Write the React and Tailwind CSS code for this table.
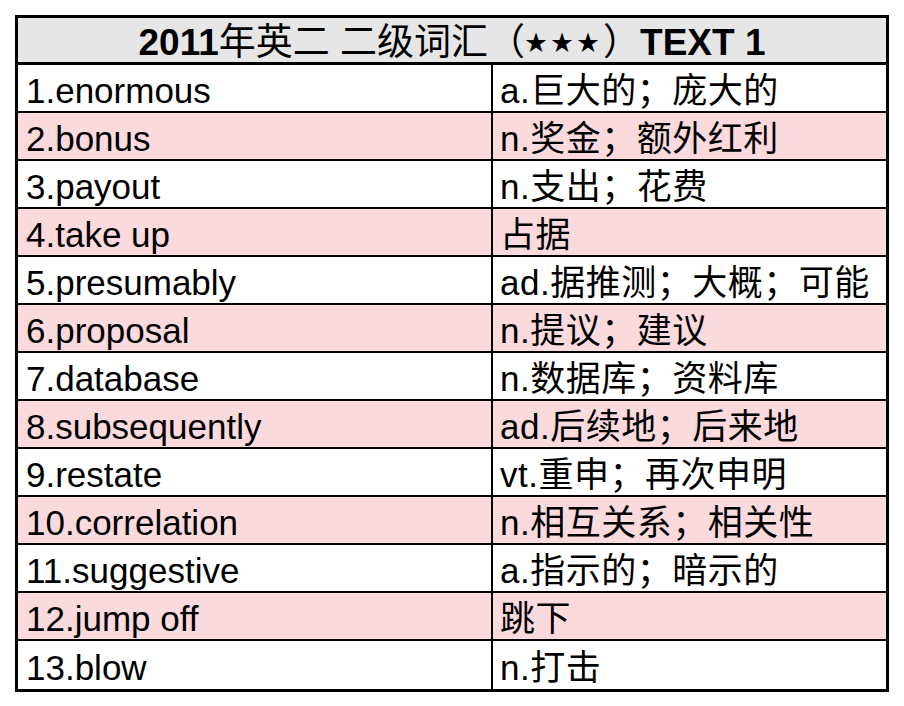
import React from 'react';

const rows = [
  ['1.enormous', 'a.巨大的；庞大的'],
  ['2.bonus', 'n.奖金；额外红利'],
  ['3.payout', 'n.支出；花费'],
  ['4.take up', '占据'],
  ['5.presumably', 'ad.据推测；大概；可能'],
  ['6.proposal', 'n.提议；建议'],
  ['7.database', 'n.数据库；资料库'],
  ['8.subsequently', 'ad.后续地；后来地'],
  ['9.restate', 'vt.重申；再次申明'],
  ['10.correlation', 'n.相互关系；相关性'],
  ['11.suggestive', 'a.指示的；暗示的'],
  ['12.jump off', '跳下'],
  ['13.blow', 'n.打击'],
];

export default function App() {
  return (
    <div className="w-[904px] h-[706px] bg-white pt-[15px] pl-[15px] text-black font-['Liberation_Sans','Noto_Sans_CJK_SC',sans-serif]">
      <div className="w-[874px] border-[3px] border-black">
        {/* title row */}
        <div className="h-[47px] bg-[#e6e6e6] border-b-[3px] border-black flex items-center justify-center text-[37px] leading-none font-bold pt-[5px]">
          <span>2011</span>
          <span className="font-normal">年英二 二级词汇（</span>
          <span className="text-[22px] font-normal tracking-[4px]">★★★</span>
          <span className="font-normal">）</span>
          <span>TEXT 1</span>
        </div>
        {rows.map(([en, zh], i) => (
          <div
            key={i}
            className={
              'h-[48px] flex text-[35px] leading-none ' +
              (i % 2 === 1 ? 'bg-[#fadadd] ' : 'bg-white ') +
              (i < rows.length - 1 ? 'border-b-2 border-black' : '')
            }
          >
            <div className="w-[475px] border-r-2 border-black pl-[8px] flex items-center pt-[5px]">{en}</div>
            <div className="flex-1 pl-[7px] flex items-center pt-[5px] tracking-[0.5px]">{zh}</div>
          </div>
        ))}
      </div>
    </div>
  );
}
